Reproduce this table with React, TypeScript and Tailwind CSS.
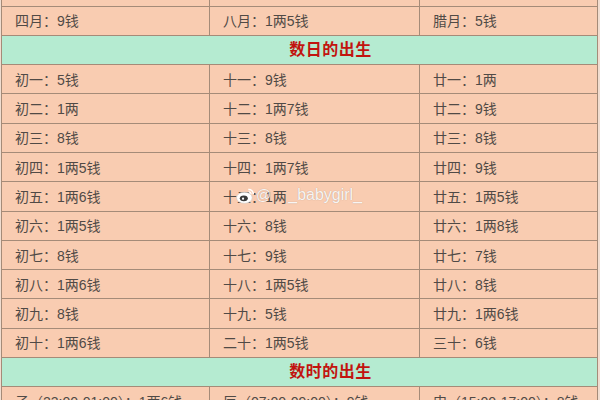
import React from "react";

const font = { fontFamily: '"Liberation Sans", "Noto Sans CJK SC", sans-serif' };

const monthRows = [
  ["三月：1两8钱", "七月：9钱", "十一月：9钱"],
  ["四月：9钱", "八月：1两5钱", "腊月：5钱"],
];

const dayRows = [
  ["初一：5钱", "十一：9钱", "廿一：1两"],
  ["初二：1两", "十二：1两7钱", "廿二：9钱"],
  ["初三：8钱", "十三：8钱", "廿三：8钱"],
  ["初四：1两5钱", "十四：1两7钱", "廿四：9钱"],
  ["初五：1两6钱", "十五：1两", "廿五：1两5钱"],
  ["初六：1两5钱", "十六：8钱", "廿六：1两8钱"],
  ["初七：8钱", "十七：9钱", "廿七：7钱"],
  ["初八：1两6钱", "十八：1两5钱", "廿八：8钱"],
  ["初九：8钱", "十九：5钱", "廿九：1两6钱"],
  ["初十：1两6钱", "二十：1两5钱", "三十：6钱"],
];

const hourRows = [
  ["子（23:00-01:00）：1两6钱", "辰（07:00-09:00）：9钱", "申（15:00-17:00）：8钱"],
];

function Row({ cells }: { cells: string[] }) {
  return (
    <div className="grid grid-cols-[208px_210px_1fr] h-[29.3px] border-b border-[#a58b78] bg-[#f9ccb1]">
      {cells.map((c, i) => (
        <div
          key={i}
          className={`flex items-center pl-[13px] pt-[2px] text-[14px] text-[#504a46] whitespace-nowrap overflow-hidden ${i < 2 ? "border-r border-[#a58b78]" : ""}`}
        >
          {c}
        </div>
      ))}
    </div>
  );
}

function Header({ title }: { title: string }) {
  return (
    <div className="flex h-[29.3px] items-center justify-center pl-[62px] border-b border-[#a58b78] bg-[#b5ebd1]">
      <span className="text-[16px] font-bold tracking-[0.5px] text-[#c2140f]">{title}</span>
    </div>
  );
}

export default function App() {
  return (
    <div className="relative w-[600px] h-[400px] overflow-hidden bg-[#f1ddd0]" style={font}>
      <div className="ml-px mr-[2px] -mt-[22.8px] border-x border-[#a58b78]">
        {monthRows.map((r, i) => (
          <Row key={i} cells={r} />
        ))}
        <Header title="数日的出生" />
        {dayRows.map((r, i) => (
          <Row key={i} cells={r} />
        ))}
        <Header title="数时的出生" />
        {hourRows.map((r, i) => (
          <Row key={i} cells={r} />
        ))}
      </div>

      {/* weibo watermark */}
      <div className="absolute left-[236px] top-[185px] flex items-center text-white/90 [text-shadow:0_0_1px_rgba(0,0,0,0.3)]">
        <svg width="19" height="17" viewBox="0 0 17 15" className="mr-[1px]">
          <ellipse cx="7.5" cy="9.5" rx="7" ry="5" fill="#ffffff" stroke="#d4ccc6" strokeWidth="0.6" />
          <ellipse cx="7" cy="10" rx="3.6" ry="2.6" fill="#3a3a3a" />
          <circle cx="6.3" cy="10.3" r="1" fill="#ffffff" />
          <path d="M11 2.2 A4 4 0 0 1 15.5 6.5" stroke="#ffffff" strokeWidth="1.4" fill="none" />
          <path d="M11.2 4.3 A2 2 0 0 1 13.5 6.4" stroke="#ffffff" strokeWidth="1.1" fill="none" />
        </svg>
        <span className="text-[15px] leading-[20px]">@</span>
        <span className="w-[17px]" />
        <span className="text-[16px] leading-[20px]">_babygirl_</span>
      </div>
    </div>
  );
}
